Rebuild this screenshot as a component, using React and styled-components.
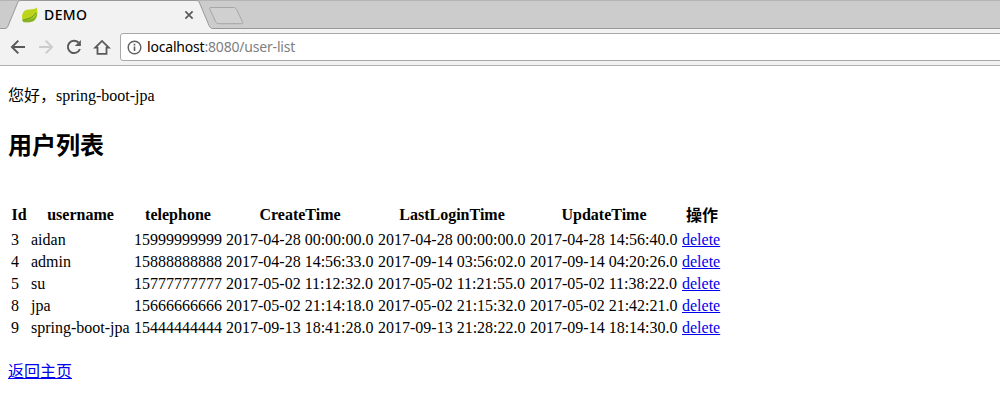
import React from 'react';
import styled, { createGlobalStyle } from 'styled-components';

const GlobalStyle = createGlobalStyle`
  body {
    margin: 0;
    background: #fff;
    color: #000;
    font-family: "Liberation Serif", "Noto Sans CJK SC", serif;
    font-size: 16px;
    overflow: hidden;
  }
`;

const Browser = styled.div`
  display: flex;
  flex-direction: column;
  height: 418px;
`;

const TabStrip = styled.div`
  display: grid;
  height: 29px;
  background: #ccc;
  font-family: "Noto Sans", "Open Sans", sans-serif;
`;

const TabShapes = styled.svg`
  grid-area: 1 / 1;
  display: block;
`;

const Tab = styled.div`
  grid-area: 1 / 1;
  z-index: 1;
  display: flex;
  align-items: center;
  width: 173px;
  height: 28px;
  padding: 1px 0 0 21px;
`;

const TabTitle = styled.span`
  flex: 1;
  margin-left: 6px;
  font-size: 14px;
  font-weight: 500;
  line-height: 20px;
  letter-spacing: 0.4px;
`;

const Toolbar = styled.div`
  display: flex;
  align-items: center;
  box-sizing: border-box;
  height: 37px;
  background: #f2f2f2;
  border-bottom: 1px solid #b0b0b0;
`;

const NavButtons = styled.div`
  display: flex;
  gap: 8px;
  padding-left: 8px;
  width: 112px;
`;

const NavIcon = styled.svg`
  display: block;
  fill: none;
  stroke: ${(p) => (p.$disabled ? '#ccc' : '#5a5a5a')};
  stroke-width: 2;
`;

const AddressBar = styled.div`
  flex: 1;
  display: flex;
  align-items: center;
  box-sizing: border-box;
  height: 28px;
  margin-right: -4px;
  padding-left: 6px;
  border: 1px solid #a8a8a8;
  border-radius: 3px;
  background: #fff;
`;

const Url = styled.span`
  margin-left: 5px;
  font-family: "Noto Sans", "Open Sans", sans-serif;
  font-size: 14px;
  line-height: 20px;
  letter-spacing: -0.19px;
  color: #808080;
`;

const Host = styled.span`
  color: #000;
`;

const Page = styled.main`
  padding: 19px 8px 0;
`;

const Greeting = styled.div`
  height: 22px;
  line-height: 22px;
`;

const Heading = styled.h2`
  margin: 21px 0 37px;
  height: 36px;
  font-size: 24px;
  line-height: 36px;
`;

const Table = styled.table`
  border-spacing: 2px;
`;

const HeaderCell = styled.th`
  min-width: ${(p) => p.$width}px;
  height: 23px;
  padding: ${(p) => (p.$lowered ? '1px 0 1px 2px' : '0 1px 2px')};
  line-height: 23px;
`;

const Cell = styled.td`
  height: 18px;
  padding: 1px;
  line-height: 18px;
  white-space: nowrap;
`;

const Link = styled.a`
  color: #0000ee;
  text-decoration: underline;
`;

const Footer = styled.div`
  margin-top: 20px;
  line-height: 24px;
`;

const columns = [
  { name: 'Id', width: 16 },
  { name: 'username', width: 99 },
  { name: 'telephone', width: 88 },
  { name: 'CreateTime', width: 148 },
  { name: 'LastLoginTime', width: 148 },
  { name: 'UpdateTime', width: 148 },
  { name: '操作', width: 38, lowered: true },
];

const users = [
  ['3', 'aidan', '15999999999', '2017-04-28 00:00:00.0', '2017-04-28 00:00:00.0', '2017-04-28 14:56:40.0'],
  ['4', 'admin', '15888888888', '2017-04-28 14:56:33.0', '2017-09-14 03:56:02.0', '2017-09-14 04:20:26.0'],
  ['5', 'su', '15777777777', '2017-05-02 11:12:32.0', '2017-05-02 11:21:55.0', '2017-05-02 11:38:22.0'],
  ['8', 'jpa', '15666666666', '2017-05-02 21:14:18.0', '2017-05-02 21:15:32.0', '2017-05-02 21:42:21.0'],
  ['9', 'spring-boot-jpa', '15444444444', '2017-09-13 18:41:28.0', '2017-09-13 21:28:22.0', '2017-09-14 18:14:30.0'],
];

const LeafIcon = () => (
  <svg width="17" height="16" viewBox="0 0 17 16">
    <path d="M15.6 0.6C16.9 5 16.9 10 13.6 13.2C10.8 15.6 6 15.6 2.4 15C0.9 12.8 0.7 9.5 1.4 7C2.3 4 5 2.7 8.5 2.6C11.8 2.5 14.2 2.2 15.6 0.6Z" fill="#bcd51c" />
    <path d="M15.6 5C15.4 8.8 13.4 10.9 10 11.8C7.2 12.5 4.5 12.6 1.6 13.8L2.4 15C6.5 15.6 10.8 15.4 13.4 13.2C15.9 10.9 16.4 8 15.6 5Z" fill="#86b32a" />
    <path d="M1.6 13.2C6.8 11.8 12 11 14.6 6" fill="none" stroke="#5f9322" strokeWidth="1" />
  </svg>
);

export default function App() {
  return (
    <Browser>
      <GlobalStyle />
      <TabStrip>
        <TabShapes width="1000" height="29" viewBox="0 0 1000 29">
          <path d="M0 0.5H1000" stroke="#b4b4b4" />
          <path d="M0 28.5H5C6.5 28.5 7.5 27.5 8 26L17.5 3C18.1 1.3 19 0.5 21 0.5H196C198 0.5 199 1.3 199.6 3L209 25.5C210 27.7 211 28.5 213 28.5H1000V30H0Z" fill="#f2f2f2" stroke="#999" />
          <path d="M211 7.5H233.5C235 7.5 236 8.2 236.6 9.5L242.5 22C243 23.2 242.5 23.7 241.3 23.7H219C217.2 23.7 216.2 23 215.6 21.5L209.8 9.2C209.2 8 209.7 7.5 211 7.5Z" fill="#d0d0d0" stroke="#a6a6a6" />
        </TabShapes>
        <Tab>
          <LeafIcon />
          <TabTitle>DEMO</TabTitle>
          <svg width="10" height="10" viewBox="0 0 10 10">
            <path d="M1.4 1.4L8.6 8.6M8.6 1.4L1.4 8.6" stroke="#5a5a5a" strokeWidth="1.7" />
          </svg>
        </Tab>
      </TabStrip>
      <Toolbar>
        <NavButtons>
          <NavIcon width="20" height="20" viewBox="0 0 20 20">
            <path d="M17 10H4.5M10.3 3.6L4 10L10.3 16.4" />
          </NavIcon>
          <NavIcon $disabled width="20" height="20" viewBox="0 0 20 20">
            <path d="M3 10H15.5M9.7 3.6L16 10L9.7 16.4" />
          </NavIcon>
          <NavIcon width="20" height="20" viewBox="0 0 20 20">
            <path d="M14.6 5.6A6.2 6.2 0 1 0 15.9 12" />
            <path d="M16.9 3V9H10.9Z" fill="#5a5a5a" stroke="none" />
          </NavIcon>
          <NavIcon width="20" height="20" viewBox="0 0 20 20">
            <path d="M3.2 10.7L10 3.9L16.8 10.7H14.5V16.8H5.5V10.7Z" strokeWidth="1.8" />
          </NavIcon>
        </NavButtons>
        <AddressBar>
          <svg width="15" height="15" viewBox="0 0 15 15">
            <circle cx="7.5" cy="7.5" r="6.3" fill="none" stroke="#606060" strokeWidth="1.4" />
            <path d="M7.5 6.6V11M7.5 3.8V5.4" stroke="#606060" strokeWidth="1.6" />
          </svg>
          <Url><Host>localhost</Host>:8080/user-list</Url>
        </AddressBar>
      </Toolbar>
      <Page>
        <Greeting>您好，spring-boot-jpa</Greeting>
        <Heading>用户列表</Heading>
        <Table>
          <thead>
            <tr>
              {columns.map(({ name, width, lowered }) => (
                <HeaderCell key={name} $width={width} $lowered={lowered}>{name}</HeaderCell>
              ))}
            </tr>
          </thead>
          <tbody>
            {users.map((user) => (
              <tr key={user[0]}>
                {user.map((value, i) => <Cell key={i}>{value}</Cell>)}
                <Cell><Link href="#">delete</Link></Cell>
              </tr>
            ))}
          </tbody>
        </Table>
        <Footer><Link href="#">返回主页</Link></Footer>
      </Page>
    </Browser>
  );
}
